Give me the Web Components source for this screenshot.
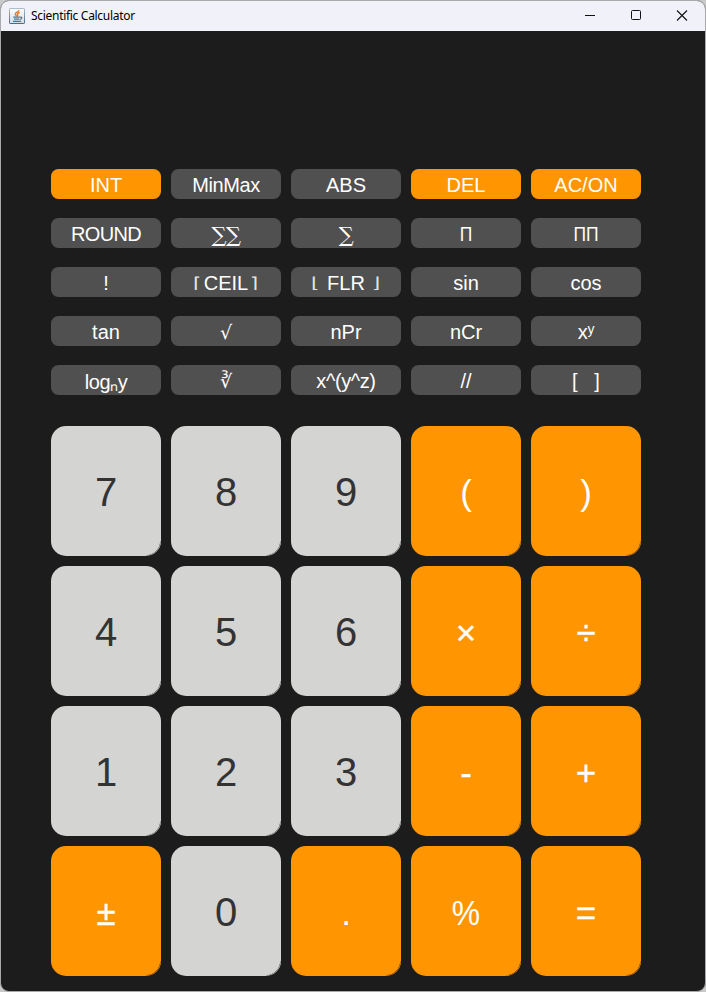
<!DOCTYPE html>
<html lang="en">
<head>
<meta charset="utf-8">
<title>Scientific Calculator</title>
<style>
html,body{margin:0;height:100%;background:#c9c9c9;overflow:hidden}
body{font-family:"Liberation Sans",Arial,sans-serif}
.sigma{font:21px/20px "DejaVu Serif",serif;letter-spacing:-.5px}
.root{font:19px/20px "DejaVu Sans",sans-serif}
.br{font:200 15px/18px "DejaVu Sans","DejaVu Sans Light",sans-serif;transform:scaleX(1.4);opacity:.85}
.narrow{transform:scaleX(.87)}
.pct{transform:scaleX(.91)}
.tight{letter-spacing:-.7px}
.snug{letter-spacing:-.4px}
.bold{-webkit-text-stroke:.3px #fff}
</style>
</head>
<body>
<calc-window>
  <title-bar slot="title">Scientific Calculator</title-bar>
  <key-grid kind="fn">
    <calc-key tone="op">INT</calc-key><calc-key class="snug">MinMax</calc-key><calc-key>ABS</calc-key><calc-key tone="op">DEL</calc-key><calc-key tone="op">AC/ON</calc-key>
    <calc-key class="tight">ROUND</calc-key><calc-key><glyph-box w="28" dy="1" class="sigma">∑∑</glyph-box></calc-key><calc-key><glyph-box w="14" dy="1" class="sigma">∑</glyph-box></calc-key><calc-key><glyph-box w="14" class="narrow">Π</glyph-box></calc-key><calc-key><glyph-box w="28" class="narrow">ΠΠ</glyph-box></calc-key>
    <calc-key>!</calc-key><calc-key><glyph-box w="13" class="br">⌈</glyph-box>CEIL<glyph-box w="13" class="br">⌉</glyph-box></calc-key><calc-key><glyph-box w="13" class="br">⌊</glyph-box>&nbsp;FLR&nbsp;<glyph-box w="13" class="br">⌋</glyph-box></calc-key><calc-key>sin</calc-key><calc-key>cos</calc-key>
    <calc-key>tan</calc-key><calc-key><glyph-box w="13" class="root">√</glyph-box></calc-key><calc-key>nPr</calc-key><calc-key>nCr</calc-key><calc-key>xʸ</calc-key>
    <calc-key class="snug">logₙy</calc-key><calc-key><glyph-box w="13" class="root">∛</glyph-box></calc-key><calc-key class="snug">x^(y^z)</calc-key><calc-key>//</calc-key><calc-key>[&nbsp;&nbsp; ]</calc-key>
  </key-grid>
  <key-grid kind="num">
    <calc-key tone="digit">7</calc-key><calc-key tone="digit">8</calc-key><calc-key tone="digit">9</calc-key><calc-key tone="op">(</calc-key><calc-key tone="op">)</calc-key>
    <calc-key tone="digit">4</calc-key><calc-key tone="digit">5</calc-key><calc-key tone="digit">6</calc-key><calc-key tone="op" class="bold">×</calc-key><calc-key tone="op" class="bold">÷</calc-key>
    <calc-key tone="digit">1</calc-key><calc-key tone="digit">2</calc-key><calc-key tone="digit">3</calc-key><calc-key tone="op" class="bold">-</calc-key><calc-key tone="op" class="bold">+</calc-key>
    <calc-key tone="op" class="bold">±</calc-key><calc-key tone="digit">0</calc-key><calc-key tone="op">.</calc-key><calc-key tone="op"><glyph-box w="32" class="pct">%</glyph-box></calc-key><calc-key tone="op" class="bold">=</calc-key>
  </key-grid>
</calc-window>
<script>
const define = (name, html, init) => customElements.define(name, class extends HTMLElement {
  constructor() {
    super();
    const t = document.createElement('template');
    t.innerHTML = html;
    this.attachShadow({mode: 'open'}).append(t.content.cloneNode(true));
  }
  connectedCallback() { if (init) init(this); }
});

define('calc-window', `<style>
:host{display:flex;flex-direction:column;box-sizing:border-box;width:706px;height:992px;border:1px solid #a9a9ab;border-radius:9px;background:#1c1c1c;overflow:hidden}
main{display:flex;flex-direction:column;gap:31px;padding:138px 0 0 50px}
</style><slot name="title"></slot><main><slot></slot></main>`);

define('title-bar', `<style>
:host{display:flex;align-items:center;height:30px;flex:none;box-sizing:border-box;padding-left:8px;background:#f1f2f9;color:#000;font:12px/16px "Noto Sans","Open Sans",sans-serif}
.t{margin-left:6px;letter-spacing:-.3px;white-space:nowrap;flex:1}
svg{display:block;flex:none}
.c{width:46px}
.j{margin-top:-1px}
</style>
<svg class="j" width="16" height="16" viewBox="0 0 16 16"><defs><linearGradient id="g" x2="0" y2="1"><stop stop-color="#a9bdca"/><stop offset="1" stop-color="#3f6f92"/></linearGradient><linearGradient id="b" x2="0" y2="1"><stop stop-color="#fdfdfd"/><stop offset="1" stop-color="#d3dfe8"/></linearGradient></defs><rect x=".5" y=".5" width="15" height="15" rx=".6" fill="url(#b)" stroke="url(#g)"/><path d="M9.800 2C10.200 4 6.200 4.300 6.300 6.100C6.400 7 7.300 7.500 7.400 8.300M10.700 4.500C8.800 5 8 5.800 8.600 6.700C9 7.300 8.800 7.800 8.200 8.400" fill="none" stroke="#e87a26" stroke-width="1.400"/><path d="M4.200 9.200H10.800M5 11.200H10.200M4 13.300H12.200M11 9.200C13.800 8.600 13.200 11 10.700 11.500" fill="none" stroke="#4c7595" stroke-width="1.200"/></svg>
<span class="t"><slot></slot></span>
<svg class="c" height="30" viewBox="0 0 46 30"><path d="M18 14.500H28" stroke="#111"/></svg>
<svg class="c" height="30" viewBox="0 0 46 30"><rect x="18.500" y="9.500" width="9" height="9" rx="1" fill="none" stroke="#111"/></svg>
<svg class="c" height="30" viewBox="0 0 46 30"><path d="M18 9.500L28 19.500M28 9.500L18 19.500" stroke="#111" stroke-width="1.100"/></svg>`);

define('key-grid', `<style>
:host{display:grid;grid-template-columns:repeat(5,110px);gap:10px;--h:130px;--r:15px;--op:35px;--ty:3px;--edge:radial-gradient(circle at 0 0,transparent 13.6px,rgba(0,0,0,.4) 14.2px,transparent 14.9px) 100% 100%/15px 15px no-repeat}
:host([kind=fn]){row-gap:19px;--h:30px;--r:7.5px;--op:20px;--ty:2px;--edge:none}
</style><slot></slot>`);

define('calc-key', `<style>
:host{display:flex;align-items:center;justify-content:center;box-sizing:border-box;height:var(--h);border-radius:var(--r);padding-top:var(--ty);background:var(--edge);background-color:#505050;color:#fff;font-size:20px;white-space:nowrap}
:host([tone=op]){background-color:#ff9500;font-size:var(--op)}
:host([tone=digit]){background-color:#d4d4d2;color:#333;font-size:40px}
</style><slot></slot>`);

define('glyph-box', `<style>
:host{display:flex;justify-content:center}
</style><slot></slot>`, el => {
  el.style.width = el.getAttribute('w') + 'px';
  if (el.hasAttribute('dy')) el.style.paddingTop = el.getAttribute('dy') + 'px';
});
</script>
</body>
</html>
